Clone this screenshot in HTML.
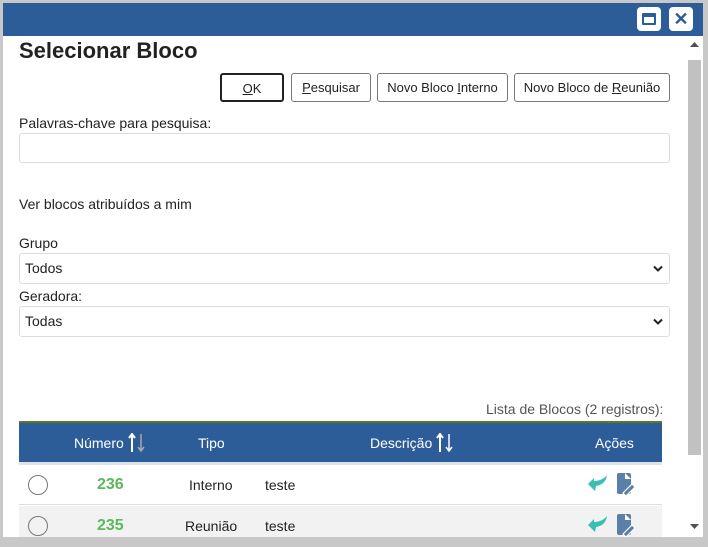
<!DOCTYPE html>
<html><head><meta charset="utf-8"><style>
*{box-sizing:border-box;margin:0;padding:0}
body{width:708px;height:547px;background:#c8c8c8;font-family:"Liberation Sans",sans-serif;position:relative;overflow:hidden;color:#222}
.win{position:absolute;left:3px;top:3px;width:700px;height:534px;background:#fff;overflow:hidden}
.bar{position:absolute;left:0;top:0;width:700px;height:33px;background:#2c5d98}
.wb{position:absolute;top:4px;width:24px;height:24px;background:#fff;border-radius:4px}
.a{position:absolute;font-size:14px;white-space:nowrap}
.btn{position:absolute;top:70px;height:29px;border:1px solid #777;border-radius:3px;font-size:13px;text-align:center;line-height:27px;background:#fff}
.in{position:absolute;left:16px;width:651px;border:1px solid #ddd;border-radius:3px;font-size:14px;padding-left:5px}
.chev{position:absolute;right:6px;top:50%;margin-top:-4px}
.sb{position:absolute;left:683px;top:33px;width:17px;height:501px;background:#fff}
</style></head><body>
<div class="win">
<div class="bar"></div>
<div class="wb" style="left:634px"><div style="position:absolute;left:5px;top:6px;width:14px;height:12px;border:2px solid #2c5d98;border-top-width:4px;border-radius:1px"></div></div>
<div class="wb" style="left:666px;text-align:center;font-weight:bold;font-size:18px;line-height:24px;color:#2c5d98">✕</div>
<div class="a" style="left:16px;top:35px;font-size:22px;font-weight:bold">Selecionar Bloco</div>
<div class="btn" style="left:217px;width:64px;border:2px solid #222"><u>O</u>K</div>
<div class="btn" style="left:288px;width:80px"><u>P</u>esquisar</div>
<div class="btn" style="left:374px;width:131px">Novo Bloco <u>I</u>nterno</div>
<div class="btn" style="left:511px;width:156px">Novo Bloco de <u>R</u>eunião</div>
<div class="a" style="left:16px;top:112px">Palavras-chave para pesquisa:</div>
<div class="in" style="top:130px;height:30px"></div>
<div class="a" style="left:16px;top:193px">Ver blocos atribuídos a mim</div>
<div class="a" style="left:16px;top:232px">Grupo</div>
<div class="in" style="top:250px;height:31px;line-height:29px">Todos<svg class="chev" width="10" height="8"><path d="M1 1.5L5 5.5L9 1.5" stroke="#222" stroke-width="2" fill="none"/></svg></div>
<div class="a" style="left:16px;top:285px">Geradora:</div>
<div class="in" style="top:303px;height:31px;line-height:29px">Todas<svg class="chev" width="10" height="8"><path d="M1 1.5L5 5.5L9 1.5" stroke="#222" stroke-width="2" fill="none"/></svg></div>
<div class="a" style="left:483px;top:398px;color:#555">Lista de Blocos (2 registros):</div>
<div style="position:absolute;left:16px;top:418px;width:643px;height:2px;background:#5a7a2a"></div>
<div style="position:absolute;left:16px;top:420px;width:643px;height:39px;background:#2c5d98;color:#fff;font-size:14px">
 <span style="position:absolute;left:55px;top:12px">Número</span>
 <svg style="position:absolute;left:109px;top:10px" width="20" height="20"><path d="M4 19V2M1 5L4 1L7 5" stroke="#fff" stroke-width="2" fill="none"/><path d="M13 1V17M10 14L13 18L16 14" stroke="#aaa" stroke-width="1.5" fill="none"/></svg>
 <span style="position:absolute;left:179px;top:12px">Tipo</span>
 <span style="position:absolute;left:351px;top:12px">Descrição</span>
 <svg style="position:absolute;left:417px;top:10px" width="20" height="20"><path d="M4 19V2M1 5L4 1L7 5" stroke="#fff" stroke-width="2" fill="none"/><path d="M13 1V17M10 14L13 18L16 14" stroke="#fff" stroke-width="1.5" fill="none"/></svg>
 <span style="position:absolute;left:576px;top:12px">Ações</span>
</div>
<div style="position:absolute;left:16px;top:459px;width:643px;height:3px;background:#dde3ea"></div>
<div style="position:absolute;left:16px;top:462px;width:643px;height:40px;background:#fff;border-bottom:1px solid #ddd"></div>
<div style="position:absolute;left:16px;top:503px;width:643px;height:40px;background:#f2f2f2"></div>
<div style="position:absolute;left:25px;top:472px;width:20px;height:20px;border:1px solid #777;border-radius:50%"></div>
<div style="position:absolute;left:25px;top:513px;width:20px;height:20px;border:1px solid #777;border-radius:50%"></div>
<div class="a" style="left:94px;top:473px;font-weight:bold;font-size:16px;color:#5cb85c">236</div>
<div class="a" style="left:94px;top:514px;font-weight:bold;font-size:16px;color:#5cb85c">235</div>
<div class="a" style="left:186px;top:474px">Interno</div>
<div class="a" style="left:182px;top:515px">Reunião</div>
<div class="a" style="left:262px;top:474px">teste</div>
<div class="a" style="left:262px;top:515px">teste</div>
<svg style="position:absolute;left:584px;top:469px" width="52" height="26"><path d="M1 12L7 6L7 9C12 9 17 7 20 3C19 10 15 13 9 14L8 19Z" fill="#3bbfb3"/><rect x="30" y="1" width="14" height="21" rx="2" fill="#5a7fa8"/><path d="M38 1L44 7L38 7Z" fill="#fff"/><path d="M36 21L45 12L48 15L39 24Z" fill="#5a7fa8" stroke="#fff" stroke-width="1.2"/></svg>
<svg style="position:absolute;left:584px;top:510px" width="52" height="26"><path d="M1 12L7 6L7 9C12 9 17 7 20 3C19 10 15 13 9 14L8 19Z" fill="#3bbfb3"/><rect x="30" y="1" width="14" height="21" rx="2" fill="#5a7fa8"/><path d="M38 1L44 7L38 7Z" fill="#fff"/><path d="M36 21L45 12L48 15L39 24Z" fill="#5a7fa8" stroke="#fff" stroke-width="1.2"/></svg>
<div class="sb"><div style="position:absolute;left:2px;top:24px;width:13px;height:395px;background:#c1c1c1"></div>
<svg style="position:absolute;left:4px;top:6px" width="9" height="6"><path d="M0 5L4.5 0L9 5Z" fill="#505050"/></svg>
<svg style="position:absolute;left:4px;top:488px" width="9" height="6"><path d="M0 0L4.5 5L9 0Z" fill="#505050"/></svg></div>
</div>
</body></html>
